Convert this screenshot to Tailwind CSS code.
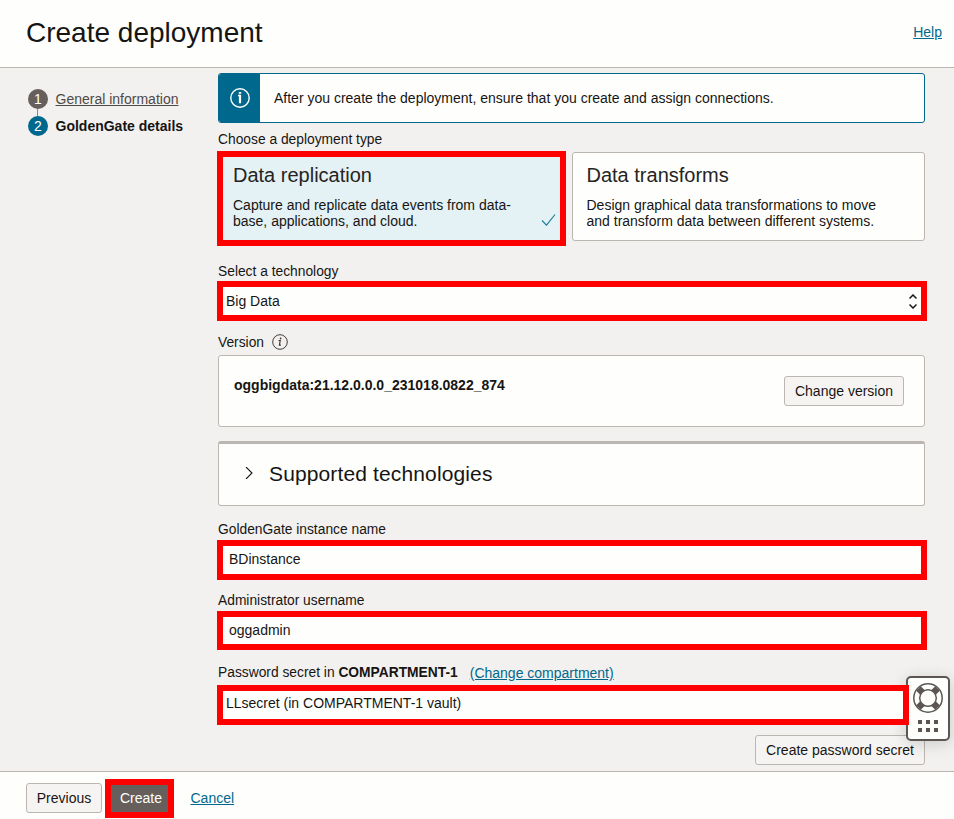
<!DOCTYPE html>
<html lang="en">
<head>
<meta charset="utf-8">
<title>Create deployment</title>
<script src="https://cdn.jsdelivr.net/npm/@tailwindcss/browser@4"></script>
</head>
<body class="h-[819px] w-[954px] overflow-hidden bg-[#f3f1f0] font-['Liberation_Sans',Arial,sans-serif] text-[14px] leading-4 text-[#161513]">
<div class="relative flex h-full flex-col">
  <header class="flex h-[68px] shrink-0 items-start justify-between border-b border-[#bcb6b1] bg-[#fefffd] pt-4 pr-3 pl-[26px]">
    <h1 class="mt-px text-[28px] leading-8 whitespace-nowrap">Create deployment</h1>
    <a class="mt-2 text-[#00688c] underline">Help</a>
  </header>

  <div class="flex h-[703px] shrink-0">
    <nav class="w-[217px] shrink-0 pt-[21px] pl-7">
      <div class="flex h-5 items-center gap-[7.500px]">
        <span class="flex size-5 items-center justify-center rounded-full bg-[#665f5b] text-white">1</span>
        <a class="whitespace-nowrap text-[#4f4a46] underline">General information</a>
      </div>
      <div class="ml-[9px] h-[7px] w-px bg-[#8b8580]"></div>
      <div class="flex h-5 items-center gap-[7.500px]">
        <span class="flex size-5 items-center justify-center rounded-full bg-[#00688c] text-white">2</span>
        <span class="font-bold whitespace-nowrap">GoldenGate details</span>
      </div>
    </nav>

    <main class="flex w-[710px] shrink-0 flex-col pt-[5px]">
      <div class="ml-px flex h-[50px] w-[707px] shrink-0 items-center overflow-hidden rounded-[3px] border border-[#00688c] bg-[#fefffd]">
        <div class="flex h-full w-[41px] items-center justify-center bg-[#00688c]">
          <svg class="size-5" viewBox="0 0 20 20" fill="none"><circle cx="10" cy="10" r="9.2" stroke="#fff" stroke-width="1.4"/><path d="M8 7.500h2" stroke="#fff" stroke-width="1.400"/><path d="M10 6.800V15.300" stroke="#fff" stroke-width="2.200"/><path d="M8.800 4h2.400v1.800H8.800z" fill="#fff"/></svg>
        </div>
        <p class="pl-[14px]">After you create the deployment, ensure that you create and assign connections.</p>
      </div>

      <div class="mt-2 ml-px h-4 shrink-0 text-[13.800px] leading-[18px]">Choose a deployment type</div>
      <div class="mt-1 flex h-[95px] shrink-0 gap-1.5">
        <div class="flex w-[349px] items-end justify-between border-6 border-[#ff0000] bg-[#e4f1f5] pr-1 pl-2.5">
          <div class="h-full pt-1.5">
            <h2 class="text-[20px] leading-6 text-[#262422]">Data replication</h2>
            <p class="mt-2.5 whitespace-nowrap">Capture and replicate data events from data-<br>base, applications, and cloud.</p>
          </div>
          <svg class="mb-3.5 h-3 w-[15px]" viewBox="0 0 15 12" fill="none"><path d="M1 6.500L5.500 11.200L14 .5" stroke="#227e9e" stroke-width="1.200"/></svg>
        </div>
        <div class="mt-px h-[89px] w-[353px] rounded-[3px] border border-[#bcb6b1] bg-[#fefffd] pt-2.5 pl-[13.500px]">
          <h2 class="text-[20px] leading-6 text-[#262422]">Data transforms</h2>
          <p class="mt-2.5 whitespace-nowrap">Design graphical data transformations to move<br>and transform data between different systems.</p>
        </div>
      </div>

      <div class="mt-[17px] ml-px h-4 shrink-0 text-[13.800px] leading-[18px]">Select a technology</div>
      <div class="mt-0.5 flex h-10 shrink-0 items-center justify-between border-6 border-[#ff0000] bg-[#fefffd] pr-1 pl-[3px]">
        <span>Big Data</span>
        <svg class="h-[15px] w-2" viewBox="0 0 8 15" fill="none" stroke="#161513" stroke-width="1.500"><path d="M.5 4.500L4 1L7.500 4.500M.5 10.500L4 14L7.500 10.500"/></svg>
      </div>

      <div class="mt-[13px] ml-px flex h-4 shrink-0 items-center gap-2 text-[13.800px]">
        <span class="w-[46px] pt-0.5">Version</span>
        <svg class="size-4" viewBox="0 0 16 16" fill="none"><circle cx="8" cy="8" r="7.300" stroke="#403c38"/><path d="M6.500 6.500h1.700L7.400 11.200h1.500" stroke="#403c38" stroke-width="1.200"/><circle cx="8.600" cy="4.500" r=".9" fill="#403c38"/></svg>
      </div>
      <div class="mt-[5px] ml-px flex h-[72px] w-[707px] shrink-0 items-start justify-between rounded-[3px] border border-[#bcb6b1] bg-[#fefffd] pt-5 pr-5 pl-[15px]">
        <span class="mt-px font-bold">oggbigdata:21.12.0.0.0_231018.0822_874</span>
        <button class="h-[30px] w-[120px] rounded-[3px] border border-[#bcb6b1] bg-[#f6f4f3] whitespace-nowrap">Change version</button>
      </div>

      <div class="mt-3.5 ml-px flex h-[65px] w-[707px] shrink-0 items-center rounded-[3px] border border-t-3 border-[#bcb6b1] bg-[#fefffd] pl-[26px]">
        <svg class="mb-1 h-3 w-2" viewBox="0 0 8 12" fill="none"><path d="M1 0L7 6L1 12" stroke="#161513" stroke-width="1.100"/></svg>
        <h2 class="mb-0.5 ml-4 text-[21px] leading-6 tracking-[0.13px]">Supported technologies</h2>
      </div>

      <div class="mt-[15px] ml-px h-4 shrink-0 text-[13.800px] leading-[18px]">GoldenGate instance name</div>
      <div class="mt-[3px] flex h-10 shrink-0 items-center border-6 border-[#ff0000] bg-[#fefffd] pb-0.5 pl-1.5">BDinstance</div>

      <div class="mt-3 ml-px h-4 shrink-0 text-[13.800px] leading-[18px]">Administrator username</div>
      <div class="mt-[3px] flex h-[39px] shrink-0 items-center border-6 border-[#ff0000] bg-[#fefffd] pb-px pl-1.5">oggadmin</div>

      <div class="mt-3.5 ml-px flex h-4 shrink-0">
        <span class="text-[13.800px] leading-[18px]">Password secret in <b>COMPARTMENT-1</b></span>
        <a class="mt-px ml-3 text-[#00688c] underline">(Change compartment)</a>
      </div>
      <div class="relative z-20 mt-[5px] flex h-10 w-[692px] shrink-0 items-center border-6 border-[#ff0000] bg-[#fefffd] pb-1 pl-[3px]">LLsecret (in COMPARTMENT-1 vault)</div>
      <button class="mt-2.5 mr-0.5 h-[30px] w-[170px] shrink-0 self-end rounded-[3px] border border-[#bcb6b1] bg-[#f6f4f3] whitespace-nowrap">Create password secret</button>
    </main>
  </div>

  <footer class="flex h-12 shrink-0 items-start border-t border-[#bcb6b1] bg-[#fefffd] pl-[26px]">
    <button class="mt-[11px] h-[30px] w-[76px] rounded-[3px] border border-[#bcb6b1] bg-[#f6f4f3]">Previous</button>
    <button class="mt-[7px] ml-[3px] h-[39px] w-[69px] border-6 border-[#ff0000] bg-[#665f5b] pb-0.5 pl-[3px] text-white">Create</button>
    <a class="mt-[18px] ml-[16.500px] text-[#00688c] underline">Cancel</a>
  </footer>

  <!-- Floating support widget -->
  <div class="absolute top-[676px] left-[906px] z-10 flex h-[65px] w-11 flex-col items-center rounded-[5px] border-2 border-[#5b5652] bg-[#fefffd] pt-[5px] shadow-[0_3px_16px_rgba(0,0,0,0.16)]">
    <svg class="size-[30px]" viewBox="0 0 30 30" fill="none">
      <path d="M5.500 5.500L9.500 9.500M20.500 20.500L24.500 24.500M24.500 5.500L20.500 9.500M9.500 20.500L5.500 24.500" stroke="#5b5652" stroke-width="6.500"/>
      <circle cx="15" cy="15" r="14.200" stroke="#5b5652" stroke-width="1.500"/>
      <circle cx="15" cy="15" r="8.300" fill="#fefffd" stroke="#5b5652" stroke-width="1.500"/>
    </svg>
    <div class="mt-[7px] grid grid-cols-3 gap-1">
      <i class="size-1 bg-[#5b5652]"></i><i class="size-1 bg-[#5b5652]"></i><i class="size-1 bg-[#5b5652]"></i>
      <i class="size-1 bg-[#5b5652]"></i><i class="size-1 bg-[#5b5652]"></i><i class="size-1 bg-[#5b5652]"></i>
    </div>
  </div>
</div>
</body>
</html>
